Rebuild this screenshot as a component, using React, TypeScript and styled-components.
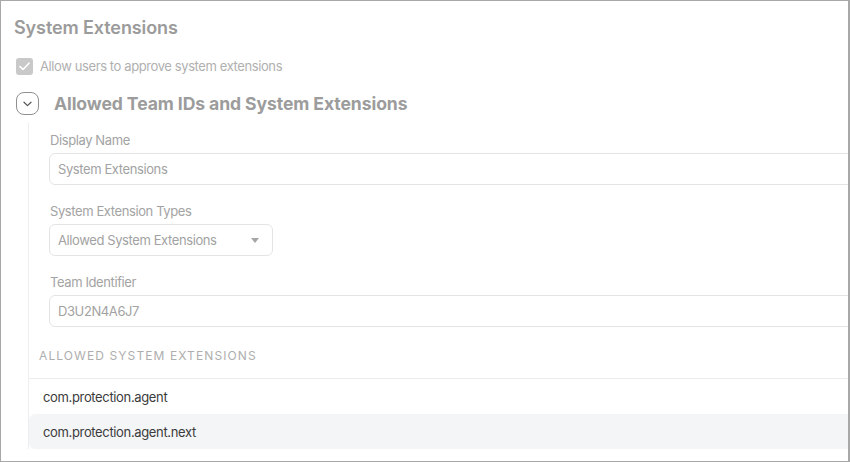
import React from 'react';
import styled, { createGlobalStyle } from 'styled-components';

const GlobalStyle = createGlobalStyle`
  html, body {
    margin: 0;
    padding: 0;
    background: #ffffff;
  }
  body {
    font-family: Inter, "Noto Sans", "Liberation Sans", sans-serif;
  }
  * {
    box-sizing: border-box;
  }
`;

const Frame = styled.div`
  width: 850px;
  height: 462px;
  border: 1px solid #a8a8a8;
  border-right-width: 2px;
  background: #ffffff;
  overflow: hidden;
  padding: 15px 0 0 13px;
`;

const Title = styled.h1`
  margin: 0;
  font-size: 18px;
  line-height: 24px;
  font-weight: 600;
  color: #9b9b9b;
  letter-spacing: -0.1px;
`;

const CheckRow = styled.label`
  display: flex;
  align-items: center;
  gap: 7px;
  margin: 17px 0 0 2px;
  height: 18px;
`;

const CheckBox = styled.span`
  width: 17px;
  height: 17px;
  border-radius: 3px;
  background: #c9c9c9;
  display: flex;
  align-items: center;
  justify-content: center;
`;

const CheckText = styled.span`
  font-size: 13px;
  letter-spacing: -0.4px;
  color: #b0b0b0;
`;

const SectionHeader = styled.div`
  display: flex;
  align-items: center;
  gap: 15px;
  margin: 17px 0 0 2px;
  height: 23px;
`;

const ToggleButton = styled.span`
  width: 23px;
  height: 23px;
  border: 1px solid #8f8f8f;
  border-radius: 8px;
  display: flex;
  align-items: center;
  justify-content: center;
`;

const SectionTitle = styled.h2`
  margin: 0;
  font-size: 17.6px;
  font-weight: 700;
  color: #9c9c9c;
  letter-spacing: -0.1px;
`;

const Section = styled.div`
  margin: 8px 0 0 14px;
  border-left: 1px solid #eeeeee;
  width: 900px;
  padding-top: 9px;
`;

const Form = styled.div`
  padding-left: 20px;
  display: flex;
  flex-direction: column;
  gap: 18px;
`;

const Field = styled.div`
  display: flex;
  flex-direction: column;
`;

const Label = styled.div`
  font-size: 13px;
  line-height: 16px;
  letter-spacing: -0.4px;
  color: #a3a3a3;
  margin: 0 0 5px 1px;
`;

const Input = styled.div`
  height: 32px;
  border: 1px solid #e4e4e4;
  border-radius: 6px;
  padding: 0 8px;
  display: flex;
  align-items: center;
  font-size: 13px;
  letter-spacing: -0.4px;
  color: #a2a2a2;
`;

const Select = styled(Input)`
  width: 224px;
  justify-content: space-between;
  padding-right: 13px;
`;

const Caret = styled.span`
  width: 0;
  height: 0;
  border-left: 4px solid transparent;
  border-right: 4px solid transparent;
  border-top: 5px solid #a6a6a6;
`;

const ListHeading = styled.div`
  margin-top: 21px;
  padding-left: 10px;
  font-size: 12px;
  line-height: 16px;
  letter-spacing: 1.1px;
  text-transform: uppercase;
  color: #aeaeae;
  padding-bottom: 14px;
  border-bottom: 1px solid #ececec;
`;

const ListRow = styled.div<{ shaded?: boolean }>`
  height: 35px;
  display: flex;
  align-items: center;
  padding-left: 14px;
  font-size: 13px;
  letter-spacing: -0.35px;
  color: #3b3b3b;
  background: ${({ shaded }) => (shaded ? '#f4f5f7' : 'transparent')};
  border-radius: ${({ shaded }) => (shaded ? '6px 0 0 6px' : '0')};
`;

const extensions = ['com.protection.agent', 'com.protection.agent.next'];

export default function App() {
  return (
    <>
      <GlobalStyle />
      <Frame>
        <Title>System Extensions</Title>
        <CheckRow>
          <CheckBox>
            <svg width="11" height="9" viewBox="0 0 11 9" fill="none">
              <path d="M1 4.6L4 7.5L10 1.2" stroke="#ffffff" strokeWidth="1.6" strokeLinecap="round" strokeLinejoin="round" />
            </svg>
          </CheckBox>
          <CheckText>Allow users to approve system extensions</CheckText>
        </CheckRow>
        <SectionHeader>
          <ToggleButton>
            <svg width="9" height="6" viewBox="0 0 9 6" fill="none">
              <path d="M1 1.2L4.5 4.6L8 1.2" stroke="#555555" strokeWidth="1.2" strokeLinecap="round" strokeLinejoin="round" />
            </svg>
          </ToggleButton>
          <SectionTitle>Allowed Team IDs and System Extensions</SectionTitle>
        </SectionHeader>
        <Section>
          <Form>
            <Field>
              <Label>Display Name</Label>
              <Input>System Extensions</Input>
            </Field>
            <Field>
              <Label>System Extension Types</Label>
              <Select>
                Allowed System Extensions
                <Caret />
              </Select>
            </Field>
            <Field>
              <Label>Team Identifier</Label>
              <Input>D3U2N4A6J7</Input>
            </Field>
          </Form>
          <ListHeading>Allowed System Extensions</ListHeading>
          {extensions.map((ext, i) => (
            <ListRow key={ext} shaded={i % 2 === 1}>
              {ext}
            </ListRow>
          ))}
        </Section>
      </Frame>
    </>
  );
}
